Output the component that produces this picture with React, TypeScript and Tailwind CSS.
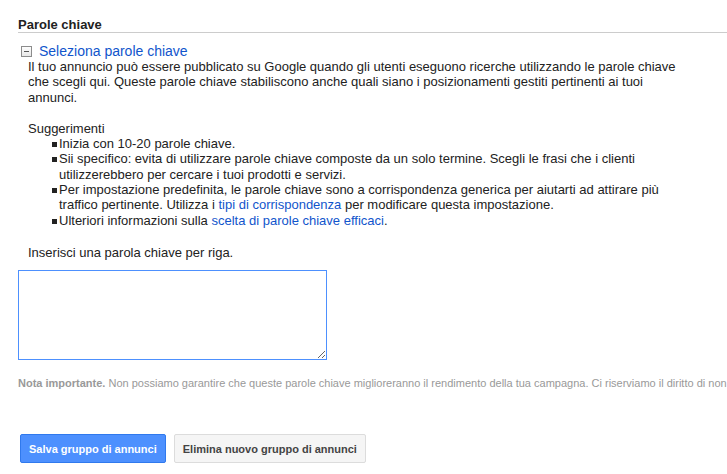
import React from "react";

const tips = [
  { id: 1, content: <>Inizia con 10-20 parole chiave.</> },
  {
    id: 2,
    content: (
      <>
        Sii specifico: evita di utilizzare parole chiave composte da un solo termine. Scegli le frasi che i clienti
        utilizzerebbero per cercare i tuoi prodotti e servizi.
      </>
    ),
  },
  {
    id: 3,
    content: (
      <>
        Per impostazione predefinita, le parole chiave sono a corrispondenza generica per aiutarti ad attirare più
        traffico pertinente. Utilizza i <a className="text-[#15c]">tipi di corrispondenza</a> per modificare questa
        impostazione.
      </>
    ),
  },
  {
    id: 4,
    content: (
      <>
        Ulteriori informazioni sulla <a className="text-[#15c]">scelta di parole chiave efficaci</a>.
      </>
    ),
  },
];

const CollapseIcon = () => (
  <svg width="11" height="11" viewBox="0 0 11 11">
    <defs>
      <linearGradient id="box" x1="0" y1="0" x2="0" y2="1">
        <stop offset="0" stopColor="#ffffff" />
        <stop offset="1" stopColor="#e6e6e6" />
      </linearGradient>
    </defs>
    <rect x="0.5" y="0.5" width="10" height="10" fill="url(#box)" stroke="#8c8c8c" />
    <line x1="3" y1="5.5" x2="8" y2="5.5" stroke="#555" />
  </svg>
);

export default function App() {
  return (
    <div className="w-[727px] h-[474px] overflow-hidden bg-white text-[#222] font-['Liberation_Sans',Arial,sans-serif]">
      <div className="pl-[18px] pt-[17px]">
        <h2 className="text-[13px] font-bold leading-[15px] border-b border-[#cccccc]">Parole chiave</h2>

        <div className="mt-[10px] flex items-center h-[16px]">
          <span className="ml-[3px] flex">
            <CollapseIcon />
          </span>
          <a className="ml-[7px] text-[14px] leading-[16px] text-[#15c]">Seleziona parole chiave</a>
        </div>

        <div className="pl-[10px] w-[670px] text-[13px] leading-[15.3px]">
          <p>
            Il tuo annuncio può essere pubblicato su Google quando gli utenti eseguono ricerche utilizzando le parole
            chiave che scegli qui. Queste parole chiave stabiliscono anche quali siano i posizionamenti gestiti
            pertinenti ai tuoi annunci.
          </p>

          <p className="mt-[16px]">Suggerimenti</p>
          <ul className="pl-[24px]">
            {tips.map((tip) => (
              <li key={tip.id} className="flex">
                <span className="mt-[6px] mr-[2px] w-[5px] h-[5px] shrink-0 bg-[#222]" />
                <span>{tip.content}</span>
              </li>
            ))}
          </ul>

          <p className="mt-[17px]">Inserisci una parola chiave per riga.</p>
        </div>

        <textarea className="mt-[10px] block w-[309px] h-[90px] border border-[#4d90fe] outline-none" />

        <p className="mt-[17px] text-[11px] leading-[13px] text-[#999] whitespace-nowrap">
          <span className="font-bold">Nota importante.</span> Non possiamo garantire che queste parole chiave
          miglioreranno il rendimento della tua campagna. Ci riserviamo il diritto di non approvare alcune parole
          chiave.
        </p>

        <div className="mt-[44px] ml-[2px] flex gap-[8px]">
          <button className="h-[29px] px-[8px] rounded-[2px] border border-[#3079ed] bg-[#4d90fe] text-[11px] font-bold text-white">
            Salva gruppo di annunci
          </button>
          <button className="h-[29px] px-[8px] rounded-[2px] border border-[#dcdcdc] bg-[#f5f5f5] text-[11px] font-bold text-[#444]">
            Elimina nuovo gruppo di annunci
          </button>
        </div>
      </div>
    </div>
  );
}
